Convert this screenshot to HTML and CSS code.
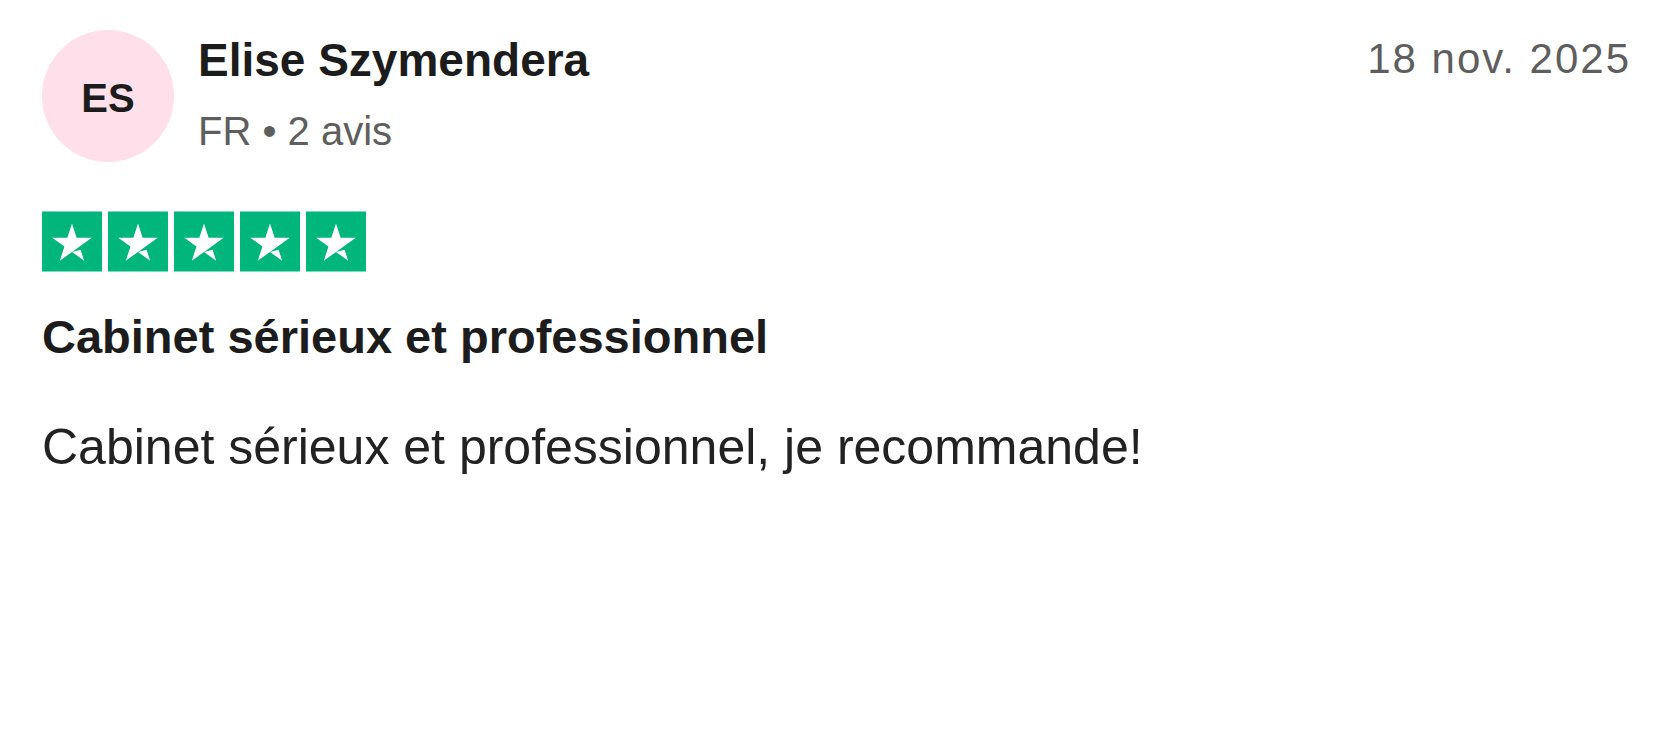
FILE: index.html
```html
<!DOCTYPE html>
<html lang="fr">
<head>
<meta charset="utf-8">
<title>Avis</title>
<link rel="stylesheet" href="styles.css">
</head>
<body>
<article class="review">
  <header class="review-header">
    <div class="avatar"><span>ES</span></div>
    <div class="consumer">
      <div class="consumer-name">Elise Szymendera</div>
      <div class="consumer-meta">FR • 2 avis</div>
    </div>
    <time class="review-date">18 nov. 2025</time>
  </header>
  <div class="stars" aria-label="Noté 5 sur 5">
    <svg class="star" viewBox="0 0 46 46"><rect width="46" height="46" fill="#00b67a"/><path fill="#fff" d="M38.162 20.039H26.56L22.994 9.112l-3.566 10.927H7.827l9.39 6.773-3.567 10.928 9.39-6.773 5.778-4.155z"/><path fill="#fff" d="M22.994 31.01l6.591-1.67 2.754 8.488z"/></svg>
    <svg class="star" viewBox="0 0 46 46"><rect width="46" height="46" fill="#00b67a"/><path fill="#fff" d="M38.162 20.039H26.56L22.994 9.112l-3.566 10.927H7.827l9.39 6.773-3.567 10.928 9.39-6.773 5.778-4.155z"/><path fill="#fff" d="M22.994 31.01l6.591-1.67 2.754 8.488z"/></svg>
    <svg class="star" viewBox="0 0 46 46"><rect width="46" height="46" fill="#00b67a"/><path fill="#fff" d="M38.162 20.039H26.56L22.994 9.112l-3.566 10.927H7.827l9.39 6.773-3.567 10.928 9.39-6.773 5.778-4.155z"/><path fill="#fff" d="M22.994 31.01l6.591-1.67 2.754 8.488z"/></svg>
    <svg class="star" viewBox="0 0 46 46"><rect width="46" height="46" fill="#00b67a"/><path fill="#fff" d="M38.162 20.039H26.56L22.994 9.112l-3.566 10.927H7.827l9.39 6.773-3.567 10.928 9.39-6.773 5.778-4.155z"/><path fill="#fff" d="M22.994 31.01l6.591-1.67 2.754 8.488z"/></svg>
    <svg class="star" viewBox="0 0 46 46"><rect width="46" height="46" fill="#00b67a"/><path fill="#fff" d="M38.162 20.039H26.56L22.994 9.112l-3.566 10.927H7.827l9.39 6.773-3.567 10.928 9.39-6.773 5.778-4.155z"/><path fill="#fff" d="M22.994 31.01l6.591-1.67 2.754 8.488z"/></svg>
  </div>
  <h2 class="review-title">Cabinet sérieux et professionnel</h2>
  <p class="review-text">Cabinet sérieux et professionnel, je recommande!</p>
</article>
</body>
</html>
```
FILE: styles.css
```css
html, body {
  margin: 0;
  padding: 0;
  background: #ffffff;
}

body {
  font-family: "Liberation Sans", Arial, sans-serif;
  color: #1c1c1c;
}

.review {
  padding: 30px 28px 0 42px;
}

.review-header {
  display: flex;
  align-items: flex-start;
}

.avatar {
  width: 132px;
  height: 132px;
  border-radius: 50%;
  background: #ffdfe9;
  display: flex;
  align-items: center;
  justify-content: center;
  flex-shrink: 0;
}

.avatar span {
  font-size: 40px;
  font-weight: 700;
  line-height: 1;
  padding-top: 4px;
  color: #1c1c1c;
}

.consumer {
  margin-left: 24px;
  margin-top: 3px;
  display: flex;
  flex-direction: column;
}

.consumer-name {
  font-size: 46px;
  font-weight: 700;
  line-height: 1.2;
  color: #1c1c1c;
}

.consumer-meta {
  margin-top: 19px;
  font-size: 40px;
  line-height: 1.2;
  color: #5e5e5e;
}

.review-date {
  margin-left: auto;
  margin-top: 4px;
  font-size: 42px;
  line-height: 1.2;
  letter-spacing: 2px;
  color: #5e5e5e;
}

.stars {
  display: flex;
  gap: 6px;
  margin-top: 49px;
}

.star {
  display: block;
  width: 60px;
  height: 61px;
}

.review-title {
  margin: 37px 0 0 0;
  font-size: 47px;
  font-weight: 700;
  line-height: 1.2;
  color: #1c1c1c;
}

.review-text {
  margin: 52px 0 0 0;
  font-size: 50px;
  line-height: 1.2;
  color: #222222;
}
```
